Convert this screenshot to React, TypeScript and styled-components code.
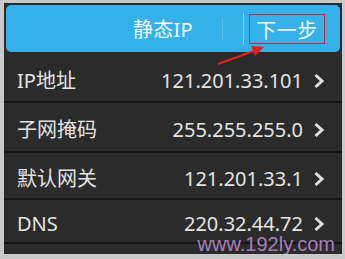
import React from "react";
import styled, { createGlobalStyle } from "styled-components";

const Global = createGlobalStyle`
  html, body { margin: 0; padding: 0; background: #c9c9c9; }
  body { width: 345px; height: 259px; overflow: hidden; }
  * { box-sizing: border-box; }
`;

const Frame = styled.div`
  position: relative;
  margin: 3px 3px 0 4px;
  width: 338px;
  height: 251px;
  background: #2b2b2b;
  display: flex;
  flex-direction: column;
  font-family: "Noto Sans", "Noto Sans CJK SC", sans-serif;
  overflow: hidden;
`;

const Header = styled.div`
  margin: 2px;
  height: 47px;
  background: #33b1e8;
  border-radius: 5px;
  display: flex;
  align-items: center;
  padding-right: 15px;
  color: #f4fbff;
  font-size: 20px;
`;

const Title = styled.div`
  flex: 1;
  text-align: right;
  padding-right: 29px;
  letter-spacing: 0.3px;
`;

const Divider = styled.div<{ $strong?: boolean }>`
  width: 1px;
  height: ${(p) => (p.$strong ? 32 : 22)}px;
  background: ${(p) => (p.$strong ? "rgba(255,255,255,0.45)" : "rgba(255,255,255,0.18)")};
`;

const Gap = styled.div<{ $w: number }>`
  width: ${(p) => p.$w}px;
`;

const NextButton = styled.div`
  width: 76px;
  height: 30px;
  border: 1.5px solid #c42a3a;
  display: flex;
  align-items: center;
  justify-content: center;
  padding-top: 1px;
  letter-spacing: 0.5px;
`;

const Row = styled.div<{ $h: number }>`
  height: ${(p) => p.$h}px;
  flex-shrink: 0;
  display: flex;
  align-items: center;
  padding: 6px 17px 0 13px;
  color: #e4e4e4;
  font-size: 20px;
  line-height: 22px;
  border-bottom: 2px solid #151515;
  &:last-of-type { border-bottom: none; }
`;

const Label = styled.div`
  flex: 1;
`;

const Value = styled.div`
  margin-right: 10px;
`;

const Chevron = styled.svg`
  width: 12px;
  height: 16px;
`;

const Watermark = styled.div`
  position: absolute;
  right: 7px;
  bottom: 1px;
  font-family: "Liberation Sans", Arial, sans-serif;
  font-size: 20px;
  line-height: 18px;
  color: #a680bd;
`;

const Arrow = styled.svg`
  position: absolute;
  left: 210px;
  top: 38px;
  width: 60px;
  height: 30px;
  overflow: visible;
`;

const rows = [
  { label: "IP地址", value: "121.201.33.101", h: 49 },
  { label: "子网掩码", value: "255.255.255.0", h: 50 },
  { label: "默认网关", value: "121.201.33.1", h: 47 },
  { label: "DNS", value: "220.32.44.72", h: 44 },
];

export default function App() {
  return (
    <>
      <Global />
      <Frame>
        <Header>
          <Title>静态IP</Title>
          <Divider />
          <Gap $w={20} />
          <Divider $strong />
          <Gap $w={5} />
          <NextButton>下一步</NextButton>
        </Header>
        {rows.map((r) => (
          <Row key={r.label} $h={r.h}>
            <Label>{r.label}</Label>
            <Value>{r.value}</Value>
            <Chevron viewBox="0 0 12 16">
              <path d="M2.5 2 L9 8 L2.5 14" fill="none" stroke="#e0e0e0" strokeWidth="3" />
            </Chevron>
          </Row>
        ))}
        <Watermark>www.192ly.com</Watermark>
        <Arrow viewBox="0 0 60 30">
          <line x1="4" y1="23" x2="40" y2="10" stroke="#e3201c" strokeWidth="2" />
          <polygon points="50,6 37,5 41,15" fill="#e3201c" />
        </Arrow>
      </Frame>
    </>
  );
}
